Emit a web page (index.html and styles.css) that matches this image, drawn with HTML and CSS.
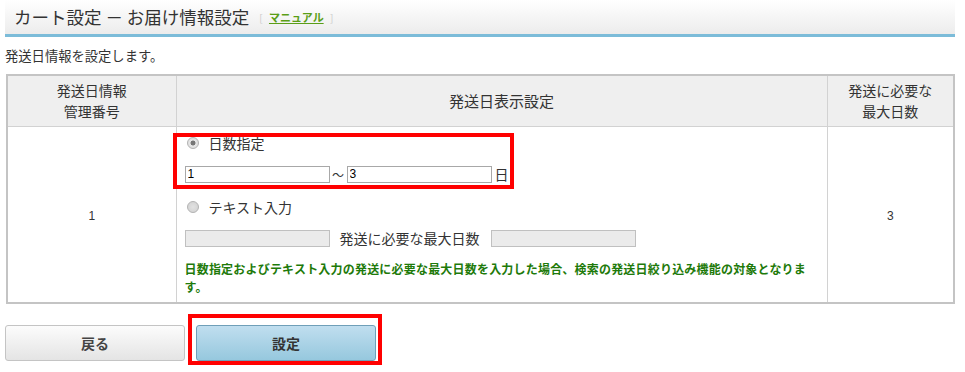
FILE: index.html
```html
<html>
<head>
    <title>カート設定 － お届け情報設定</title>
    <meta http-equiv="Content-Type" content="text/html; charset=UTF-8"/>
    <link rel="stylesheet" href="styles.css">
</head>
<body>
<div class="title">
    <h1>カート設定 － お届け情報設定</h1>
    <span class="manual">[ <a href="#">マニュアル</a> ]</span>
</div>
<p class="lead">発送日情報を設定します。</p>
<table class="grid">
    <tr>
        <th class="c1">発送日情報<br>管理番号</th>
        <th class="c2">発送日表示設定</th>
        <th class="c3">発送に必要な<br>最大日数</th>
    </tr>
    <tr>
        <td class="num">1</td>
        <td class="setting">
            <div class="mark mark-days"></div>
            <div class="opt"><input type="radio" name="mode" id="days" checked/><label for="days">日数指定</label></div>
            <div class="line first">
                <input type="text" class="field" value="1"/><span class="sep">～</span><input type="text" class="field" value="3"/><span class="unit">日</span>
            </div>
            <div class="opt"><input type="radio" name="mode" id="text"/><label for="text">テキスト入力</label></div>
            <div class="line second">
                <input type="text" class="field" disabled/><span class="lbl">発送に必要な最大日数</span><input type="text" class="field" disabled/>
            </div>
            <p class="note">日数指定およびテキスト入力の発送に必要な最大日数を入力した場合、検索の発送日絞り込み機能の対象となります。</p>
        </td>
        <td class="num">3</td>
    </tr>
</table>
<div class="buttons">
    <button class="btn back">戻る</button>
    <div class="submit-wrap">
        <div class="mark mark-btn"></div>
        <button class="btn submit">設定</button>
    </div>
</div>
</body>
</html>
```

FILE: styles.css
```css
html, body {
    margin: 0px;
    background: #fff;
    color: #333;
    font-family: "Noto Sans CJK JP", "Liberation Sans", sans-serif;
    font-size: 13px;
}

body {
    padding: 0 10px 0 5px;
}

* {
    box-sizing: border-box;
}

.title {
    display: flex;
    align-items: center;
    height: 37px;
    padding: 0 0 1px 9px;
    background: linear-gradient(#fff, #ececec);
    border-bottom: 3px solid #7cbcd9;
}

.title h1 {
    margin: 0px;
    font-size: 17.5px;
    line-height: 20px;
    font-weight: normal;
    color: #333;
}

.manual {
    margin-left: 10px;
    font-size: 10px;
    color: #ccc;
}

.manual a {
    color: #5a9e16;
    font-weight: bold;
    font-size: 11px;
    margin: 0 4px;
}

.lead {
    margin: 9px 0 0 0;
    line-height: 20px;
    font-size: 13.3px;
}

.grid {
    margin-top: 8px;
    width: 949px;
    margin-left: 1px;
    border-collapse: collapse;
    border: 2px solid #c4c4c4;
}

.grid th {
    background: #efefef;
    font-weight: normal;
    font-size: 14px;
    height: 51px;
    padding: 0;
    line-height: 20.5px;
    border: 1px solid #d2d2d2;
}

.grid th.c2 {
    font-size: 15px;
}

.grid td {
    border: 1px solid #d2d2d2;
}

.c1 {
    width: 169px;
}

.c3 {
    width: 127px;
}

.num {
    text-align: center;
    font-family: "Liberation Sans", sans-serif;
    font-size: 12px;
    padding-top: 4px;
}

.setting {
    position: relative;
    padding: 7px 8px 0 8px;
    height: 177px;
    vertical-align: top;
}

.opt {
    display: flex;
    align-items: center;
    height: 18px;
    line-height: 18px;
    font-size: 14px;
}

.opt input {
    appearance: none;
    margin: 0 10px 0 2px;
    width: 12px;
    height: 12px;
    border-radius: 50%;
    border: 1px solid #b4b4b4;
    background: radial-gradient(circle, #e2e2e2 0, #d0d0d0 100%);
}

.opt input:checked {
    background: radial-gradient(circle, #777 0, #777 30%, #e8e8e8 40%, #d8d8d8 100%);
}

.line {
    display: flex;
    align-items: center;
    height: 17px;
    line-height: 17px;
    font-size: 14px;
}

.line.first {
    margin: 14px 0 15px 0;
}

.line.second {
    margin: 14px 0 13px 0;
}

.field {
    width: 145px;
    height: 17px;
    border: 1px solid #a8a8a8;
    padding: 0 2px;
    font-family: "Liberation Sans", sans-serif;
    font-size: 12px;
    color: #000;
}

.field:disabled {
    background: #ebebeb;
    border-color: #c0c0c0;
}

.sep {
    width: 17px;
    text-align: center;
    font-size: 12px;
}

.unit {
    margin-left: 3px;
}

.lbl {
    width: 161px;
    padding-left: 10px;
    white-space: nowrap;
}

.note {
    margin: 0px;
    color: #1e7a0a;
    font-weight: bold;
    font-size: 12px;
    line-height: 18px;
    letter-spacing: 0.2px;
}

.mark {
    position: absolute;
    border: 4px solid #ff0000;
    pointer-events: none;
}

.mark-days {
    left: -4px;
    top: 6px;
    width: 341px;
    height: 56px;
}

.buttons {
    display: flex;
    gap: 11px;
    margin-top: 21px;
}

.btn {
    width: 180px;
    height: 36px;
    border-radius: 3px;
    font-family: "Noto Sans CJK JP", sans-serif;
    font-size: 14px;
    font-weight: bold;
    color: #444;
}

.back {
    background: linear-gradient(#fcfcfc, #e4e4e4);
    border: 1px solid #c4c4c4;
}

.submit-wrap {
    position: relative;
}

.submit {
    background: linear-gradient(#c0deef, #96c8de);
    border: 1px solid #6f9fb8;
    color: #333;
}

.mark-btn {
    left: -8px;
    top: -11px;
    width: 194px;
    height: 51px;
}
```
